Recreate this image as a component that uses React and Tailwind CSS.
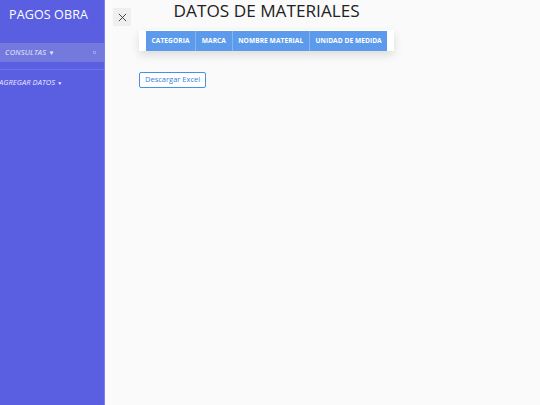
import React from 'react';

const font = { fontFamily: '"Open Sans", "Noto Sans", sans-serif' };

function Sidebar() {
  return (
    <aside className="flex h-[405px] w-[105px] shrink-0 flex-col border-r border-[#7b80ea] bg-[#5a5fe2] text-white">
      <h1 className="mt-[6px] pl-[9px] text-[12.5px] font-medium leading-[18px] tracking-[0.01em]">PAGOS OBRA</h1>
      <div className="mt-[19px] flex h-[19px] items-center justify-between bg-[#7479dd] pl-[5px] pr-[8px]">
        <span className="text-[7.5px] italic leading-none tracking-[0.03em] text-[#e8e9ff]">
          CONSULTAS <span className="text-[6px] not-italic">▼</span>
        </span>
        <span className="h-[3px] w-[3px] border border-[#9a9ef0]" />
      </div>
      <div className="mt-[7px] border-t border-[#6c71e6]" />
      <div className="mt-[8px] flex h-[10px] items-center">
        <span className="-ml-[1px] text-[7.5px] italic leading-none tracking-[0.01em] text-[#e8e9ff]">
          AGREGAR DATOS <span className="text-[5px] not-italic">▼</span>
        </span>
      </div>
    </aside>
  );
}

const cols = ['CATEGORIA', 'MARCA', 'NOMBRE MATERIAL', 'UNIDAD DE MEDIDA'];

function App() {
  return (
    <div className="flex h-[405px] w-[540px] overflow-hidden bg-[#fafafa]" style={font}>
      <Sidebar />
      <main className="flex flex-1 flex-col pl-[8px]">
        <div className="flex items-start">
          <button className="mt-[8px] flex h-[18px] w-[18px] items-center justify-center bg-[#efefef] text-[#444]">
            <svg width="9" height="9" viewBox="0 0 10 10" fill="none" stroke="currentColor" strokeWidth="1.1">
              <path d="M1 1l8 8M9 1l-8 8" />
            </svg>
          </button>
          <div className="ml-[8px] flex flex-col items-center">
            <h2 className="text-[17.2px] font-medium leading-[22px] text-[#222]">DATOS DE MATERIALES</h2>
            <div className="mt-[8px] bg-white px-[7px] pt-[1px] shadow-[0_4px_10px_rgba(0,0,0,0.12)]">
              <table className="border-collapse">
                <thead>
                  <tr className="bg-[#5c9aeb]">
                    {cols.map((c) => (
                      <th
                        key={c}
                        className="h-[20px] border-x border-[#86b4f0] px-[5.6px] text-[6.6px] font-bold leading-none tracking-[0.01em] text-white first:border-l-0 last:border-r-0"
                      >
                        {c}
                      </th>
                    ))}
                  </tr>
                </thead>
              </table>
            </div>
          </div>
        </div>
        <div className="ml-[26px] mt-[13px]">
          <button className="h-[16px] rounded-[2px] border border-[#4a90e2] bg-white px-[5px] text-[7.5px] leading-none text-[#3a7fd8]">
            Descargar Excel
          </button>
        </div>
      </main>
    </div>
  );
}

export default App;
